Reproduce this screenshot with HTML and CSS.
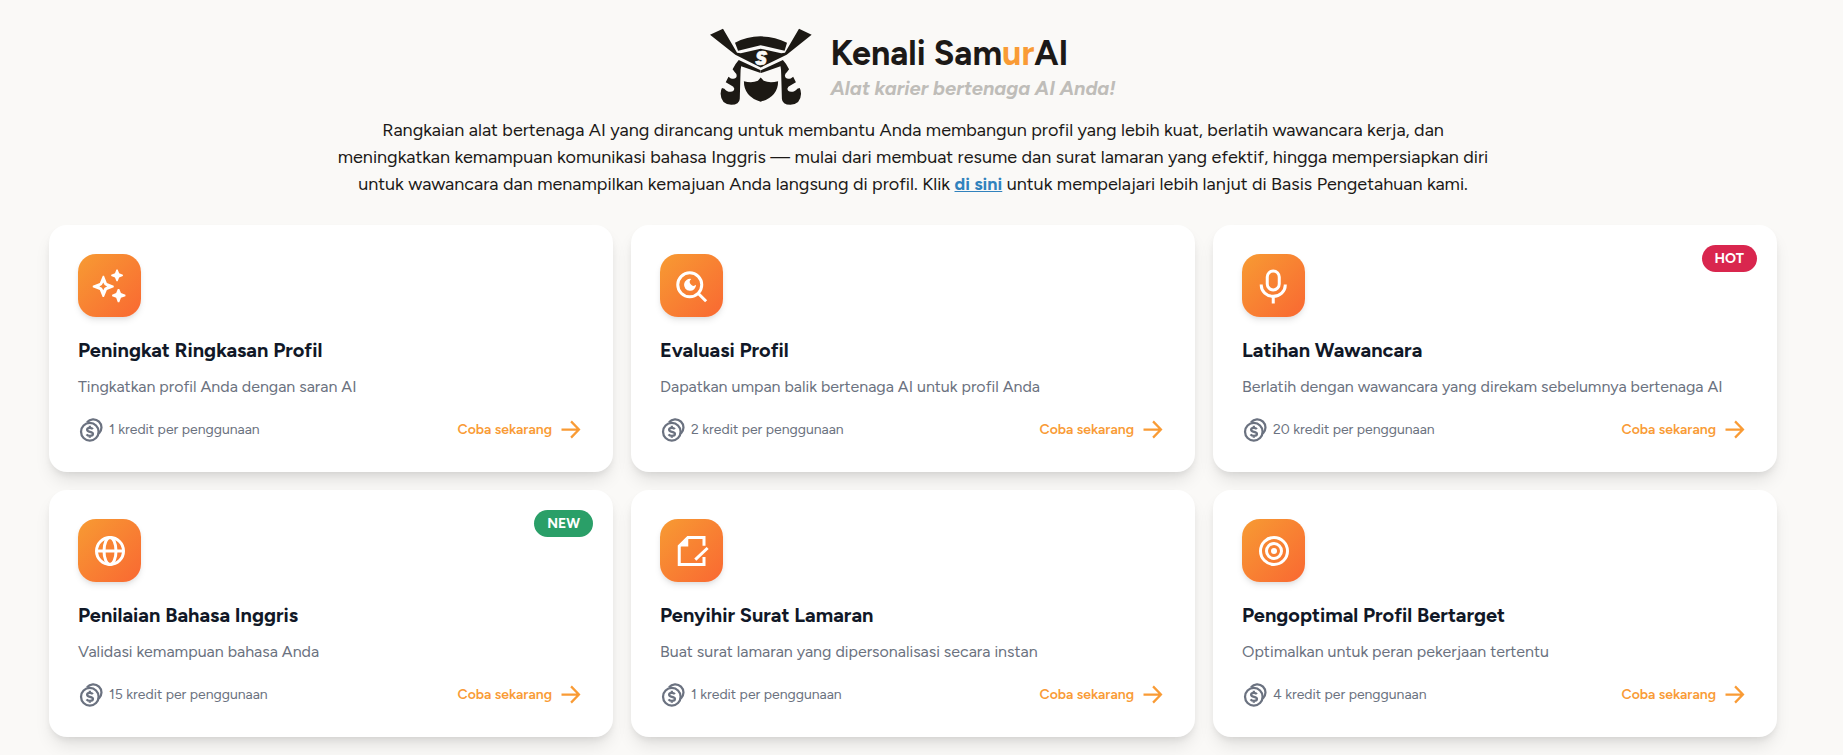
FILE: index.html
```html
<!DOCTYPE html>
<html lang="id">
<head>
    <meta charset="UTF-8">
    <meta name="viewport" content="width=device-width, initial-scale=1.0">
    <title>Kenali SamurAI</title>
    <link rel="stylesheet" href="styles.css">
</head>
<body>
    <!-- Shared icons -->
    <svg class="sprite" aria-hidden="true">
        <symbol id="coins" viewBox="0 0 24 24">
            <g fill="none" stroke="currentColor" stroke-width="2">
                <circle cx="10.500" cy="14" r="7.800"/>
                <path d="M8 5.500A7.300 7.300 0 1 1 18.500 15.600"/>
                <path d="M13.200 11.700c-.6-.9-1.500-1.200-2.700-1.200-1.400 0-2.400.7-2.400 1.700 0 2.500 5.200 1.200 5.200 3.700 0 1.100-1.100 1.700-2.700 1.700-1.300 0-2.400-.4-3-1.300M10.500 8.700v1.800M10.500 17.500v1.800"/>
            </g>
        </symbol>
        <symbol id="arrow" viewBox="0 0 24 24">
            <path d="M4 12h15M12.500 4.800l7 7.200-7 7.200" fill="none" stroke="currentColor" stroke-width="2"/>
        </symbol>
    </svg>

    <header class="intro">
        <div class="brand">
            <svg class="logo" viewBox="30 31 298 225" role="img" aria-label="SamurAI">
                <g fill="#1c1914">
                    <path d="M30 49L68 32L109 102L120 103L178 90L238 103L249 102L290 32L327 49L254 108L178 145L104 108Z"/>
                    <path d="M103 73Q137 54 178 54Q220 54 255 73L248 96L178 80L112 96Z"/>
                    <path id="flap" d="M114 123L178 153V161L121 141Q119 150 119 165L117 236Q116 254 92 254Q62 253 61 222Q61 211 65 205L72 207Q78 216 90 216Q100 215 101 207Q100 201 91 197L76 188L84 172L91 177Q106 181 108 170Q109 163 102 158L96 150Q103 135 114 123Z"/>
                    <use href="#flap" transform="matrix(-1 0 0 1 357 0)"/>
                    <path d="M129 185Q152 192 170 184L178 174L187 184Q205 192 229 185Q229 230 178 245Q129 230 129 185Z"/>
                </g>
                <text x="179" y="137" class="logo-letter">S</text>
            </svg>
            <div class="brand-text">
                <h1>Kenali Sam<span class="accent">ur</span>AI</h1>
                <p class="tagline">Alat karier bertenaga AI Anda!</p>
            </div>
        </div>
        <p class="description">Rangkaian alat bertenaga AI yang dirancang untuk membantu Anda membangun profil yang lebih kuat, berlatih wawancara kerja, dan meningkatkan kemampuan komunikasi bahasa Inggris — mulai dari membuat resume dan surat lamaran yang efektif, hingga mempersiapkan diri untuk wawancara dan menampilkan kemajuan Anda langsung di profil. Klik <a href="#">di sini</a> untuk mempelajari lebih lanjut di Basis Pengetahuan kami.</p>
    </header>

    <main class="tools">
        <article class="card">
            <div class="tile">
                <svg viewBox="0 0 24 24" fill="#fff">
                    <path fill-rule="evenodd" d="M7.200 5.200h.8l1.900 4.800 4.600 1.800v1l-4.600 1.900-1.900 4.600h-.9l-1.900-4.600-4.700-1.900v-1l4.700-1.800zM7.500 9.700l-.9 1.700-1.700.9 1.700.9.9 1.700.9-1.700 1.700-.9-1.700-.9z"/>
                    <path d="M16.300 1h.8l1 2.500 2.500 1v.9l-2.500 1-1 2.500h-.8l-1-2.500-2.500-1v-.9l2.500-1zM17.200 14h1l1.100 2.700 3 1.100v1l-3 1.100-1.100 2.900h-1l-1.100-2.900-2.700-1.100v-1l2.700-1.100z"/>
                </svg>
            </div>
            <h2>Peningkat Ringkasan Profil</h2>
            <p class="summary">Tingkatkan profil Anda dengan saran AI</p>
            <div class="card-footer">
                <span class="credits"><svg><use href="#coins"/></svg>1 kredit per penggunaan</span>
                <a class="try" href="#">Coba sekarang<svg><use href="#arrow"/></svg></a>
            </div>
        </article>

        <article class="card">
            <div class="tile">
                <svg viewBox="0 0 24 24" fill="none" stroke="#fff" stroke-width="2">
                    <circle cx="10.500" cy="11.200" r="8"/>
                    <path d="M16.200 17l5.200 5.200"/>
                    <path d="M11.500 7.300a4 4 0 1 0 3.200 3.900 2.200 2.200 0 1 1-3.200-3.900z" fill="#fff" stroke="none"/>
                </svg>
            </div>
            <h2>Evaluasi Profil</h2>
            <p class="summary">Dapatkan umpan balik bertenaga AI untuk profil Anda</p>
            <div class="card-footer">
                <span class="credits"><svg><use href="#coins"/></svg>2 kredit per penggunaan</span>
                <a class="try" href="#">Coba sekarang<svg><use href="#arrow"/></svg></a>
            </div>
        </article>

        <article class="card">
            <span class="badge hot">HOT</span>
            <div class="tile">
                <svg viewBox="0 0 24 24" fill="none" stroke="#fff" stroke-width="2">
                    <rect x="7.500" y="2" width="8" height="12.600" rx="4"/>
                    <path d="M3.500 11v.5a8 7.400 0 0 0 16 0V11M11.500 19v4.600"/>
                </svg>
            </div>
            <h2>Latihan Wawancara</h2>
            <p class="summary">Berlatih dengan wawancara yang direkam sebelumnya bertenaga AI</p>
            <div class="card-footer">
                <span class="credits"><svg><use href="#coins"/></svg>20 kredit per penggunaan</span>
                <a class="try" href="#">Coba sekarang<svg><use href="#arrow"/></svg></a>
            </div>
        </article>

        <article class="card">
            <span class="badge new">NEW</span>
            <div class="tile">
                <svg viewBox="0 0 24 24" fill="none" stroke="#fff" stroke-width="2">
                    <circle cx="12" cy="12" r="9"/>
                    <ellipse cx="12" cy="12" rx="4" ry="9"/>
                    <path d="M3 12h18"/>
                </svg>
            </div>
            <h2>Penilaian Bahasa Inggris</h2>
            <p class="summary">Validasi kemampuan bahasa Anda</p>
            <div class="card-footer">
                <span class="credits"><svg><use href="#coins"/></svg>15 kredit per penggunaan</span>
                <a class="try" href="#">Coba sekarang<svg><use href="#arrow"/></svg></a>
            </div>
        </article>

        <article class="card">
            <div class="tile">
                <svg viewBox="0 0 24 24" fill="none" stroke="#fff" stroke-width="2">
                    <path d="M20 8.500V3H9.300L3.500 8.700V21H20v-5"/>
                    <path d="M9.500 2.500V9H3z" fill="#fff" stroke="none"/>
                    <path d="M14.200 17.800l8.200-7.800"/>
                </svg>
            </div>
            <h2>Penyihir Surat Lamaran</h2>
            <p class="summary">Buat surat lamaran yang dipersonalisasi secara instan</p>
            <div class="card-footer">
                <span class="credits"><svg><use href="#coins"/></svg>1 kredit per penggunaan</span>
                <a class="try" href="#">Coba sekarang<svg><use href="#arrow"/></svg></a>
            </div>
        </article>

        <article class="card">
            <div class="tile">
                <svg viewBox="0 0 24 24" fill="none" stroke="#fff" stroke-width="2">
                    <circle cx="12" cy="12" r="9"/>
                    <circle cx="12" cy="12" r="5"/>
                    <circle cx="12" cy="12" r="2" fill="#fff" stroke="none"/>
                </svg>
            </div>
            <h2>Pengoptimal Profil Bertarget</h2>
            <p class="summary">Optimalkan untuk peran pekerjaan tertentu</p>
            <div class="card-footer">
                <span class="credits"><svg><use href="#coins"/></svg>4 kredit per penggunaan</span>
                <a class="try" href="#">Coba sekarang<svg><use href="#arrow"/></svg></a>
            </div>
        </article>
    </main>
</body>
</html>
```
FILE: styles.css
```css
* {
    margin: 0;
    padding: 0;
    box-sizing: border-box;
}

body {
    font-family: Figtree, Lato, sans-serif;
    background-color: #faf9f7;
    color: #1c1917;
    padding: 28px 66px 18px 49px;
}

.sprite {
    display: none;
}

/* Header */
.intro {
    margin-bottom: 27px;
}

.brand {
    display: flex;
    align-items: center;
    justify-content: center;
    gap: 18px;
    margin-bottom: 11px;
}

.logo {
    width: 102px;
    height: 78px;
}

.logo-letter {
    font-size: 56px;
    font-weight: 900;
    font-style: italic;
    text-anchor: middle;
    fill: #faf9f7;
    stroke: #faf9f7;
    stroke-width: 2;
}

h1 {
    font-size: 34px;
    line-height: 42px;
    font-weight: 700;
}

.accent {
    color: #f99b35;
}

.tagline {
    font-size: 20px;
    line-height: 27px;
    font-weight: 700;
    font-style: italic;
    color: #bfbdb9;
}

.description {
    max-width: 1166px;
    margin: 0 auto;
    font-size: 18px;
    line-height: 27px;
    text-align: center;
}

.description a {
    color: #3182bd;
    font-weight: 700;
}

/* Cards */
.tools {
    display: grid;
    grid-template-columns: repeat(3, 1fr);
    gap: 18px;
}

.card {
    position: relative;
    padding: 29px;
    background-color: #fff;
    border-radius: 18px;
    box-shadow: 0 11px 17px -3px rgba(0, 0, 0, 0.1), 0 4px 7px -2px rgba(0, 0, 0, 0.08);
}

.tile {
    display: flex;
    align-items: center;
    justify-content: center;
    width: 63px;
    height: 63px;
    margin-bottom: 20px;
    border-radius: 18px;
    background: linear-gradient(135deg, #f79b33, #f96832);
    box-shadow: 0 4px 7px -1px rgba(0, 0, 0, 0.1), 0 2px 4px -1px rgba(0, 0, 0, 0.06);
}

.tile svg {
    width: 36px;
    height: 36px;
}

h2 {
    font-size: 20px;
    line-height: 27px;
    font-weight: 700;
    color: #111827;
    margin-bottom: 11px;
}

.summary {
    font-size: 16px;
    line-height: 24px;
    color: #6b7280;
    margin-bottom: 17px;
}

.card-footer {
    display: flex;
    align-items: center;
    justify-content: space-between;
    font-size: 14px;
    line-height: 27px;
}

.card-footer svg {
    width: 27px;
    height: 27px;
}

.credits {
    display: flex;
    align-items: center;
    gap: 4px;
    color: #6b7280;
}

.try {
    display: flex;
    align-items: center;
    gap: 5px;
    color: #f99b35;
    font-weight: 600;
    text-decoration: none;
}

.badge {
    position: absolute;
    top: 20px;
    right: 20px;
    padding: 0 13px;
    border-radius: 14px;
    color: #fff;
    font-size: 14px;
    line-height: 27px;
    font-weight: 700;
}

.hot {
    background-color: #d9264e;
}

.new {
    background-color: #2a9f68;
}

@media (max-width: 1000px) {
    .tools {
        grid-template-columns: 1fr;
    }
}
```
